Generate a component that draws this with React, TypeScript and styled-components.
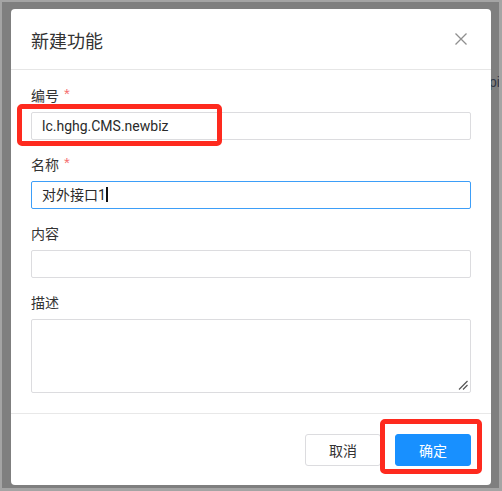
import React from "react";
import styled, { createGlobalStyle } from "styled-components";

const Global = createGlobalStyle`
  html, body { margin: 0; padding: 0; background: #7f7f7f; }
  * { box-sizing: border-box; }
  body { font-family: "Noto Sans CJK SC", "Noto Sans", sans-serif; }
`;

const Frame = styled.div`
  position: relative;
  width: 502px;
  height: 491px;
  border-style: solid;
  border-color: #a4a4a4;
  border-width: 2px 3px 3px 2px;
  background: #7f7f7f;
  padding: 7px 0 0 9px;
  overflow: hidden;
`;

const GhostText = styled.span`
  position: absolute;
  left: 487px;
  top: 72px;
  font-family: "Liberation Sans", sans-serif;
  font-size: 14px;
  color: #323846;
`;

const Modal = styled.div`
  position: relative;
  z-index: 1;
  width: 480px;
  height: 476px;
  background: #fff;
  border-radius: 4px;
  display: flex;
  flex-direction: column;
  color: #333;
`;

const Header = styled.div`
  height: 61px;
  padding: 0 20px;
  display: flex;
  align-items: center;
  justify-content: space-between;
  border-bottom: 1px solid #e6e6e6;
`;

const Title = styled.div`
  font-size: 18px;
  line-height: 24px;
  color: #333;
  padding-top: 1px;
`;

const CloseButton = styled.button`
  width: 14px;
  height: 14px;
  padding: 0;
  margin-right: 3px;
  border: none;
  background: none;
  display: flex;
  align-items: center;
  justify-content: center;
  cursor: pointer;
`;

const Body = styled.div`
  flex: 1;
  padding: 15px 20px 20px;
  display: flex;
  flex-direction: column;
  gap: 14px;
`;

const Item = styled.div`
  display: flex;
  flex-direction: column;
  gap: 7px;
`;

const Label = styled.div`
  font-size: 14px;
  line-height: 20px;
  height: 20px;
  color: #333;
  display: flex;
  align-items: flex-start;
`;

const Required = styled.span`
  color: #f56c6c;
  font-family: "Liberation Sans", sans-serif;
  font-size: 15px;
  line-height: 20px;
  margin-left: 5px;
  margin-top: -1px;
`;

const Field = styled.div<{ $focused?: boolean; $tall?: boolean }>`
  position: relative;
  height: ${(p) => (p.$tall ? "74px" : "28px")};
  border: 1px solid ${(p) => (p.$focused ? "#3d9ef8" : "#dcdcdf")};
  border-radius: 2px;
  padding: 0 10px;
  display: flex;
  align-items: ${(p) => (p.$tall ? "flex-start" : "center")};
  font-size: 14px;
  color: #333;
  background: #fff;
`;

const Value = styled.span`
  font-family: Roboto, "Noto Sans CJK SC", sans-serif;
  font-size: 14px;
  line-height: 20px;
  color: #2a2a2a;
`;

const Caret = styled.span`
  display: inline-block;
  width: 2px;
  height: 15px;
  background: #111;
  vertical-align: -2px;
`;

const Grip = styled.svg`
  position: absolute;
  right: 2px;
  bottom: 2px;
`;

const Footer = styled.div`
  height: 72px;
  border-top: 1px solid #e8e8e8;
  padding: 20px 20px 0;
  display: flex;
  justify-content: flex-end;
  align-items: flex-start;
  gap: 14px;
`;

const Button = styled.button<{ $primary?: boolean }>`
  width: 76px;
  height: 32px;
  border-radius: 3px;
  border: 1px solid ${(p) => (p.$primary ? "#1890ff" : "#dcdcdf")};
  background: ${(p) => (p.$primary ? "#1890ff" : "#fff")};
  color: ${(p) => (p.$primary ? "#fff" : "#333")};
  font-family: "Noto Sans CJK SC", sans-serif;
  font-size: 14px;
  padding: 0;
  cursor: pointer;
`;

const Highlight = styled.div<{ $l: number; $t: number; $w: number; $h: number }>`
  position: absolute;
  left: ${(p) => p.$l}px;
  top: ${(p) => p.$t}px;
  width: ${(p) => p.$w}px;
  height: ${(p) => p.$h}px;
  border: 5px solid #fe2a1e;
  border-radius: 5px;
  pointer-events: none;
`;

export default function App() {
  return (
    <>
      <Global />
      <Frame>
        <GhostText>pi</GhostText>
        <Modal>
          <Header>
            <Title>新建功能</Title>
            <CloseButton aria-label="关闭">
              <svg width="12" height="12" viewBox="0 0 12 12">
                <path d="M0.5 0.5 L11.5 11.5 M11.5 0.5 L0.5 11.5" stroke="#8f8f8f" strokeWidth="1.3" fill="none" />
              </svg>
            </CloseButton>
          </Header>
          <Body>
            <Item>
              <Label>
                编号<Required>*</Required>
              </Label>
              <Field>
                <Value>lc.hghg.CMS.newbiz</Value>
              </Field>
            </Item>
            <Item>
              <Label>
                名称<Required>*</Required>
              </Label>
              <Field $focused>
                <Value>
                  对外接口1<Caret />
                </Value>
              </Field>
            </Item>
            <Item>
              <Label>内容</Label>
              <Field />
            </Item>
            <Item>
              <Label>描述</Label>
              <Field $tall>
                <Grip width="10" height="10" viewBox="0 0 10 10">
                  <path d="M1 9.5 L9.5 1 M5 9.5 L9.5 5" stroke="#555" strokeWidth="1.2" fill="none" />
                </Grip>
              </Field>
            </Item>
          </Body>
          <Footer>
            <Button>取消</Button>
            <Button $primary>确定</Button>
          </Footer>
          <Highlight $l={6} $t={95} $w={205} $h={42} />
          <Highlight $l={369} $t={410} $w={102} $h={55} />
        </Modal>
      </Frame>
    </>
  );
}
